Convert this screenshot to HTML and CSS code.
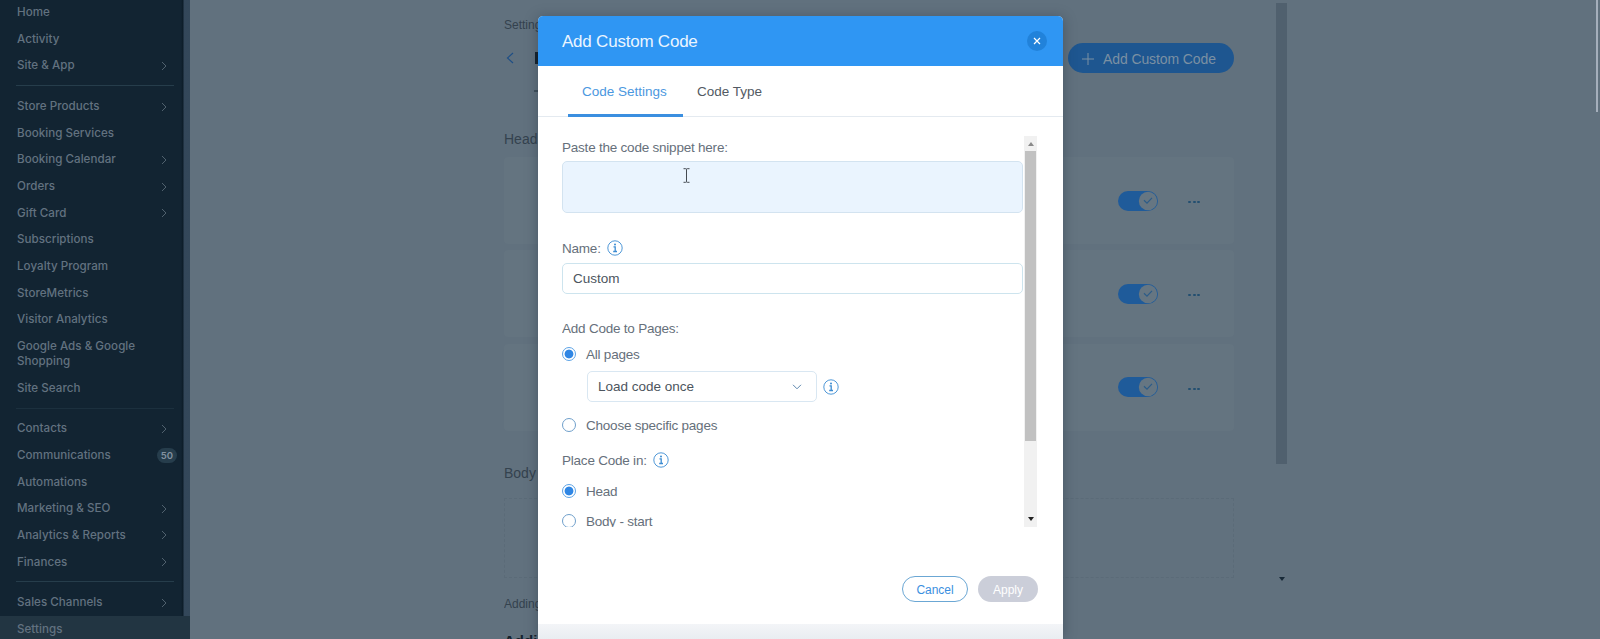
FILE: index.html
```html
<!DOCTYPE html>
<html lang="en">
<head>
<meta charset="utf-8">
<title>Custom Code</title>
<link rel="stylesheet" href="styles.css">
</head>
<body>
<svg class="defs" aria-hidden="true">
  <symbol id="chev" viewBox="0 0 6 10"><path d="M1 1l4 4-4 4" fill="none" stroke="currentColor" stroke-width="1"/></symbol>
  <symbol id="info" viewBox="0 0 16 16"><circle cx="8" cy="8" r="7.2" fill="none" stroke="currentColor" stroke-width=".9"/><path d="M6.500 6.900H8.200V11.300M6.200 11.500h3.800" fill="none" stroke="currentColor" stroke-width="1.300"/><circle cx="8" cy="4.600" r="1" fill="currentColor"/></symbol>
  <symbol id="toggle" viewBox="0 0 40 20"><rect width="40" height="20" rx="10" fill="#1f5b9a"/><circle cx="30" cy="10" r="9.2" fill="#667682"/><path d="M26 9.300l3 2.800 5-5.200" fill="none" stroke="#2c5c88" stroke-width="1.200"/></symbol>
</svg>
<div class="app">
  <nav class="side">
    <div class="menu">
      <a class="item">Home</a>
      <a class="item">Activity</a>
      <a class="item">Site &amp; App<svg class="chev"><use href="#chev"/></svg></a>
      <div class="sep"></div>
      <a class="item">Store Products<svg class="chev"><use href="#chev"/></svg></a>
      <a class="item">Booking Services</a>
      <a class="item">Booking Calendar<svg class="chev"><use href="#chev"/></svg></a>
      <a class="item">Orders<svg class="chev"><use href="#chev"/></svg></a>
      <a class="item">Gift Card<svg class="chev"><use href="#chev"/></svg></a>
      <a class="item">Subscriptions</a>
      <a class="item">Loyalty Program</a>
      <a class="item">StoreMetrics</a>
      <a class="item">Visitor Analytics</a>
      <a class="item">Google Ads &amp; Google<br>Shopping</a>
      <a class="item">Site Search</a>
      <div class="sep faint"></div>
      <a class="item">Contacts<svg class="chev"><use href="#chev"/></svg></a>
      <a class="item">Communications<span class="count">50</span></a>
      <a class="item">Automations</a>
      <a class="item">Marketing &amp; SEO<svg class="chev"><use href="#chev"/></svg></a>
      <a class="item">Analytics &amp; Reports<svg class="chev"><use href="#chev"/></svg></a>
      <a class="item">Finances<svg class="chev"><use href="#chev"/></svg></a>
      <div class="sep"></div>
      <a class="item">Sales Channels<svg class="chev"><use href="#chev"/></svg></a>
      <a class="item current">Settings</a>
    </div>
  </nav>
  <main class="main">
    <div class="content">
      <div class="crumb">Settings</div>
      <div class="titlebar">
        <svg class="back" viewBox="0 0 8 12"><path d="M7 1L1.5 6 7 11" fill="none" stroke="currentColor" stroke-width="1.2"/></svg>
        <span class="title"></span>
        <button class="add"><svg class="plus" viewBox="0 0 12 12"><path d="M6 0v12M0 6h12" stroke="currentColor" stroke-width="1"/></svg>Add Custom Code</button>
      </div>
      <div class="subtitle"></div>
      <h2 class="group">Head</h2>
      <div class="rows">
        <div class="row"><svg class="toggle"><use href="#toggle"/></svg><span class="dots"><i></i><i></i><i></i></span></div>
        <div class="row"><svg class="toggle"><use href="#toggle"/></svg><span class="dots"><i></i><i></i><i></i></span></div>
        <div class="row"><svg class="toggle"><use href="#toggle"/></svg><span class="dots"><i></i><i></i><i></i></span></div>
      </div>
      <h2 class="group second">Body</h2>
      <div class="empty"></div>
      <p class="note">Adding</p>
      <h3 class="more">Addi</h3>
    </div>
    <div class="pagebar"><div class="pagethumb"></div><svg class="pagearrow" viewBox="0 0 6 4"><path d="M0 0h6L3 4z" fill="#182a38"/></svg></div>
    <div class="winbar"></div>
  </main>
</div>
<section class="modal" role="dialog">
  <header class="head">
    <span class="headtitle">Add Custom Code</span>
    <button class="close"><svg viewBox="0 0 8 8"><path d="M1 1l6 6M7 1L1 7" stroke="#fff" stroke-width="1.2"/></svg></button>
  </header>
  <div class="tabs"><a class="tab active">Code Settings</a><a class="tab">Code Type</a></div>
  <div class="scroll">
    <div class="form">
      <label class="label l-paste">Paste the code snippet here:</label>
      <div class="area"><svg class="caret" viewBox="0 0 7 15"><path d="M.5.7h2.200q.8 0 .8.800v12q0 .800-.8.800H.5M6.500.7H4.300q-.8 0-.8.800M6.500 14.300H4.300q-.8 0-.8-.8" fill="none" stroke="#454b52" stroke-width="1"/></svg></div>
      <label class="label l-name"><span>Name:</span><svg class="info"><use href="#info"/></svg></label>
      <div class="input">Custom</div>
      <label class="label l-pages">Add Code to Pages:</label>
      <div class="opt o-all"><span class="radio on"></span><span>All pages</span></div>
      <div class="selectrow"><div class="select"><span>Load code once</span><svg class="down" viewBox="0 0 10 6"><path d="M1 .8l4 4 4-4" fill="none" stroke="currentColor" stroke-width="1"/></svg></div><svg class="info"><use href="#info"/></svg></div>
      <div class="opt o-choose"><span class="radio"></span><span>Choose specific pages</span></div>
      <label class="label l-place"><span>Place Code in:</span><svg class="info"><use href="#info"/></svg></label>
      <div class="opt o-head"><span class="radio on"></span><span>Head</span></div>
      <div class="opt o-body"><span class="radio"></span><span>Body - start</span></div>
    </div>
    <div class="bar">
      <svg class="up" viewBox="0 0 6 4"><path d="M0 4h6L3 0z" fill="#8a8a8a"/></svg>
      <div class="thumb"></div>
      <svg class="dn" viewBox="0 0 6 4"><path d="M0 0h6L3 4z" fill="#222"/></svg>
    </div>
  </div>
  <footer class="foot"><button class="btn cancel">Cancel</button><button class="btn apply">Apply</button></footer>
  <div class="strip"></div>
</section>
</body>
</html>
```
FILE: styles.css
```css
* { box-sizing: border-box; }
body { margin: 0; width: 1600px; height: 639px; overflow: hidden; background: #61717e; font-family: "Liberation Sans", Arial, sans-serif; }
button { border: 0; padding: 0; font: inherit; }
h1, h2, h3, p { margin: 0; font-weight: 400; }
.defs { position: absolute; width: 0; height: 0; }
.app { display: flex; height: 639px; }

.side { width: 190px; flex: none; overflow: hidden; background: linear-gradient(90deg, #122432 181px, #0c1c28 183px, #33475a 184px, #34485a); }
.menu { margin-top: -.7px; }
.item { display: flex; justify-content: space-between; align-items: center; padding: 5.83px 23px 5.84px 17px; line-height: 15px; font-family: Inter, sans-serif; font-size: 11.6px; font-weight: 500; letter-spacing: .03px; color: #627280; }
.chev { width: 6px; height: 10px; color: #50616e; }
.sep { height: 14px; padding: 6px 16px 0; }
.sep::before { content: ""; display: block; height: 1px; background: #263d4b; }
.sep.faint::before { background: #1c303e; }
.count { width: 20px; height: 15px; margin-right: -10px; border-radius: 8px; background: #263d4c; color: #8392a0; font-size: 9.5px; line-height: 15px; text-align: center; font-weight: 600; }
.current { background: #223542; }

.main { flex: 1; display: flex; background: #61717e; }
.content { display: flex; flex-direction: column; width: 730px; margin-left: 314px; overflow: hidden; color: #34424e; }
.content > * { flex: none; }
.crumb { height: 16px; margin-top: 17px; font-size: 12px; line-height: 16px; }
.titlebar { display: flex; align-items: center; height: 30px; margin-top: 10px; }
.back { width: 8px; height: 12px; margin-left: 2px; color: #1e4f86; }
.title { width: 3px; height: 12px; margin-left: 21px; background: #15222d; }
.add { display: flex; align-items: center; width: 166px; height: 30px; margin-left: auto; padding: 2px 0 0 14px; border-radius: 15px; background: #1e5690; color: #7b90a3; font-size: 14px; letter-spacing: -.1px; }
.plus { width: 12px; height: 12px; margin-right: 9px; }
.subtitle { width: 4px; height: 2px; margin: 17px 0 11px 30px; background: #40505c; }
.group { height: 20px; margin-top: 26px; font-size: 14px; line-height: 20px; }
.rows { display: grid; gap: 6.3px; margin-top: 8px; }
.row { display: flex; align-items: center; height: 87px; padding-left: 614px; border-radius: 4px; background: #647480; }
.toggle { width: 40px; height: 20px; }
.dots { display: flex; gap: 1.5px; margin: 3px 0 0 30px; }
.dots i { width: 3px; height: 2px; border-radius: 1px; background: #234f70; }
.second { margin-top: 32px; }
.empty { height: 80px; margin-top: 15px; border: 1px dashed #5b6b78; }
.note { margin-top: 18px; font-size: 12px; line-height: 16px; }
.more { margin-top: 19px; font-size: 15px; line-height: 20px; font-weight: 600; color: #15222d; }
.pagebar { display: flex; flex-direction: column; align-items: center; width: 11px; margin: 3px 0 0 42px; }
.pagethumb { width: 11px; height: 461px; background: #50606e; }
.pagearrow { width: 6px; height: 4px; margin-top: 113px; }
.winbar { width: 2px; height: 112px; margin: 0 2px 0 auto; background: #a5afbc; }

.modal { position: absolute; left: 538px; top: 16px; width: 525px; height: 623px; display: flex; flex-direction: column; overflow: hidden; border-radius: 5px 5px 0 0; background: #fff; color: #66707b; font-size: 13.5px; letter-spacing: -.22px; }
.app::after { content: ""; position: absolute; left: 538px; top: 18px; width: 525px; height: 621px; box-shadow: 0 0 12px rgba(20, 35, 48, .35); }
.head { display: flex; justify-content: space-between; align-items: center; flex: none; height: 50px; padding: 0 16px 0 24px; background: #2f96f3; color: #eaf5ff; }
.headtitle { padding-top: 1px; font-size: 17px; }
.close { display: flex; align-items: center; justify-content: center; width: 20px; height: 20px; border-radius: 50%; background: #2182da; }
.close svg { width: 8px; height: 8px; }
.tabs { display: flex; flex: none; height: 51px; padding-left: 30px; border-bottom: 1px solid #e4eaf0; color: #525a63; line-height: 52px; letter-spacing: 0; white-space: nowrap; }
.tab { padding: 0 14px; height: 51px; }
.tab.active { width: 115px; border-bottom: 3px solid #3b8fe0; color: #4b98e0; }
.scroll { display: flex; flex: none; width: 475px; height: 391px; margin: 19px 0 0 24px; overflow: hidden; }
.form { width: 462px; }
.label { display: flex; align-items: center; gap: 6px; height: 20px; }
.l-paste { margin-top: 1px; }
.info { width: 16px; height: 16px; color: #3c8cd2; }
.area { width: 461px; height: 52px; margin-top: 4px; padding: 6px 0 0 120px; border: 1px solid #d3e3f0; border-radius: 5px; background: #eaf4fe; }
.caret { display: block; width: 7px; height: 15px; }
.l-name { margin-top: 25px; }
.input { width: 461px; height: 31px; margin-top: 5px; padding-left: 10px; border: 1px solid #cde4ee; border-radius: 5px; line-height: 29px; color: #4c555e; letter-spacing: 0; }
.l-pages { margin-top: 24px; }
.opt { display: flex; align-items: center; gap: 10px; height: 20px; }
.radio { width: 14px; height: 14px; border: 1px solid #6f9fcb; border-radius: 50%; }
.radio.on { border-color: #5ca3e6; background: radial-gradient(circle, #2f86e4 4px, #fff 4.8px); }
.o-all { margin-top: 6px; }
.selectrow { display: flex; align-items: center; gap: 6px; margin: 7px 0 0 25px; }
.select { display: flex; align-items: center; justify-content: space-between; width: 230px; height: 31px; padding: 0 14px 0 10px; border: 1px solid #d9e7f2; border-radius: 5px; color: #4c555e; letter-spacing: 0; }
.down { width: 10px; height: 6px; color: #5d87ae; }
.o-choose { margin-top: 13px; }
.l-place { margin-top: 15px; }
.o-head { margin-top: 11px; }
.o-body { margin-top: 10px; }
.bar { display: flex; flex-direction: column; align-items: center; width: 13px; background: #f1f1f1; }
.up { flex: none; width: 6px; height: 4px; margin-top: 6px; }
.thumb { flex: none; width: 11px; height: 290px; margin-top: 5px; background: #c1c1c1; }
.dn { width: 6px; height: 4px; margin: auto 0 6px; }
.foot { display: flex; flex: none; justify-content: flex-end; gap: 10px; margin: 49px 25px 0 0; }
.btn { height: 26px; padding-top: 1px; border-radius: 13px; font-size: 12px; letter-spacing: -.05px; }
.cancel { width: 66px; border: 1px solid #6ba7d4; background: #fff; color: #3b8fe0; }
.apply { width: 60px; background: #cbced9; color: #fff; }
.strip { flex: 1; margin-top: 22px; background: linear-gradient(#f3f5f8, #e9edf1); }
```
